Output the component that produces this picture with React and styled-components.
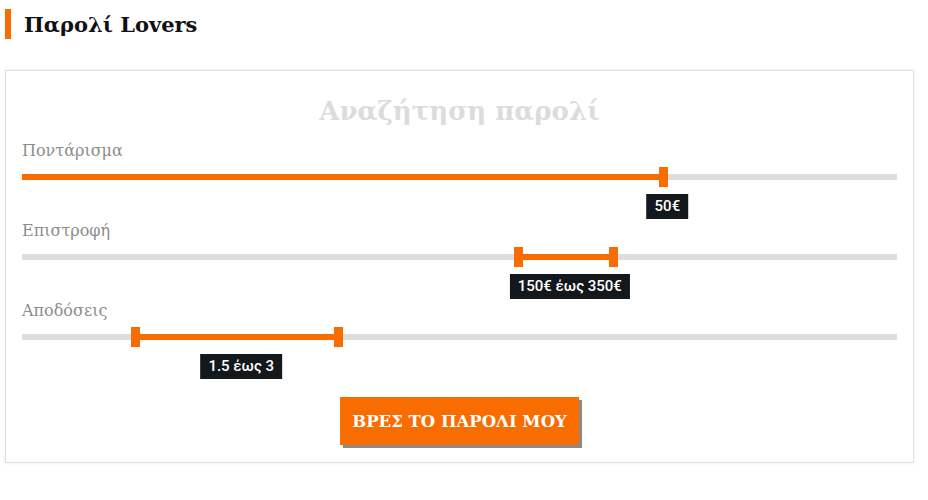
import styled, { createGlobalStyle } from "styled-components";

const Global = createGlobalStyle`
    body {
        margin: 0;
        background: #fff;
        font-family: "DejaVu Serif", serif;
    }
`
const ORANGE = '#f96c00'

const Pagina = styled.div`
    padding: 9px 14px 20px 5px;
`
const Cabecera = styled.h2`
    display: flex;
    align-items: center;
    gap: 13px;
    margin: 0;
    height: 30px;
    font-size: 21px;
    font-weight: bold;
    color: #111;

    &::before{
        content: '';
        width: 6px;
        height: 30px;
        background: ${ORANGE};
    }
`
const Tarjeta = styled.div`
    margin-top: 31px;
    border: 1px solid #dedede;
    box-shadow: 0 0 6px rgba(0,0,0,0.06);
    padding: 20px 16px 17px 16px;
    display: flex;
    flex-direction: column;
    align-items: stretch;
`
const Titulo = styled.h3`
    margin: 0 0 9px 0;
    height: 40px;
    line-height: 40px;
    text-align: center;
    font-size: 26px;
    font-weight: bold;
    color: #dcdcdc;
`
const Grupo = styled.div`
    height: 80px;
    display: flex;
    flex-direction: column;
`
const Etiqueta = styled.div`
    height: 22px;
    line-height: 22px;
    font-size: 16px;
    color: #8c8c8c;
`
const ZonaSlider = styled.div`
    position: relative;
    height: 58px;
`
const Pista = styled.div`
    position: absolute;
    left: 0;
    right: 0;
    top: 12px;
    height: 6px;
    background: #dddddd;
`
const Relleno = styled.div`
    position: absolute;
    top: 12px;
    height: 6px;
    background: ${ORANGE};
`
const Manija = styled.div`
    position: absolute;
    top: 5px;
    width: 9px;
    height: 20px;
    margin-left: -4.5px;
    background: ${ORANGE};
`
const Burbuja = styled.div`
    position: absolute;
    top: 32px;
    height: 25px;
    line-height: 25px;
    padding: 0 8px;
    transform: translateX(calc(-50% + 4px));
    white-space: nowrap;
    background: #13181d;
    color: #fff;
    font-family: Roboto, "Liberation Sans", sans-serif;
    font-weight: 500;
    font-size: 15px;
`
const Boton = styled.button`
    align-self: center;
    margin-top: 17px;
    width: 239px;
    height: 48px;
    border: none;
    background: ${ORANGE};
    color: #fff;
    font-family: "DejaVu Serif", serif;
    font-weight: bold;
    font-size: 16.5px;
    box-shadow: 3px 3px 0 #8a8a8a;
    cursor: pointer;
`

const Slider = ({ label, desde, hasta, texto }) => {
    const rango = desde !== undefined
    const inicio = rango ? desde : 0
    const centro = rango ? (desde + hasta) / 2 : hasta
    return (
        <Grupo>
            <Etiqueta>{label}</Etiqueta>
            <ZonaSlider>
                <Pista />
                <Relleno style={{ left: `${inicio}%`, width: `${hasta - inicio}%` }} />
                {rango && <Manija style={{ left: `${desde}%` }} />}
                <Manija style={{ left: `${hasta}%` }} />
                <Burbuja style={{ left: `${centro}%` }}>{texto}</Burbuja>
            </ZonaSlider>
        </Grupo>
    )
}

export default function App() {
    return (
        <Pagina>
            <Global />
            <Cabecera>Παρολί Lovers</Cabecera>
            <Tarjeta>
                <Titulo>Αναζήτηση παρολί</Titulo>
                <Slider label="Ποντάρισμα" hasta={73.3} texto="50€" />
                <Slider label="Επιστροφή" desde={56.7} hasta={67.6} texto="150€ έως 350€" />
                <Slider label="Αποδόσεις" desde={13} hasta={36.2} texto="1.5 έως 3" />
                <Boton>ΒΡΕΣ ΤΟ ΠΑΡΟΛΙ ΜΟΥ</Boton>
            </Tarjeta>
        </Pagina>
    )
}
